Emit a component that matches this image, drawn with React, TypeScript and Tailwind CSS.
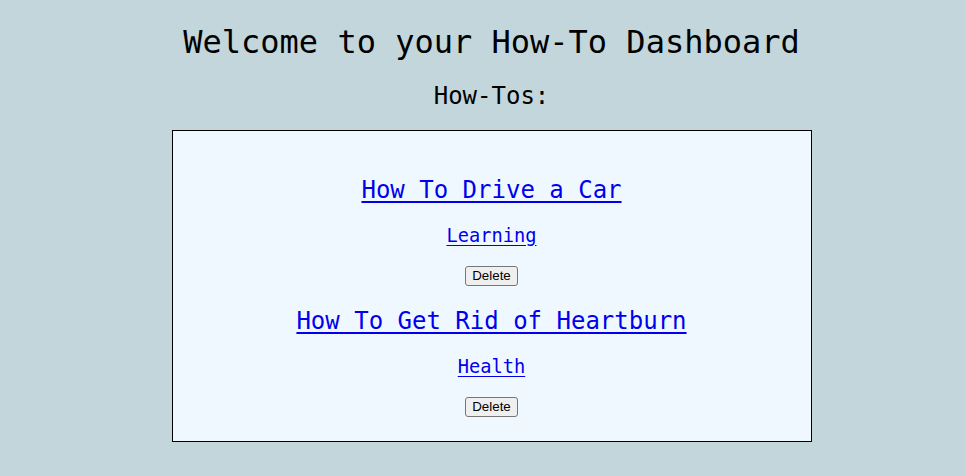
const howTos = [
  { id: 1, title: "How To Drive a Car", category: "Learning" },
  { id: 2, title: "How To Get Rid of Heartburn", category: "Health" },
];

export default function App() {
  return (
    <div
      className="min-h-screen bg-[#c2d6dc] pt-6 pl-[18px] text-center text-black"
      style={{ fontFamily: '"DejaVu Sans Mono", "Liberation Mono", monospace' }}
    >
      <h1 className="text-[32px] leading-[37px] font-normal">Welcome to your How-To Dashboard</h1>
      <h2 className="mt-[21px] text-[24px] leading-[28px] font-normal">How-Tos:</h2>

      <div className="mx-auto mt-5 w-[640px] border border-black bg-[#f0f8ff] pt-[45px] pb-[24px]">
        {howTos.map((h, i) => (
          <div key={h.id} className={i > 0 ? "mt-[21px]" : ""}>
            <a href="#" className="block text-[24px] leading-[28px] text-[#0000ee] underline underline-offset-[3px]">
              <span>{h.title}</span>
            </a>
            <a href="#" className="mt-[21px] inline-block text-[18.7px] leading-[22px] text-[#0000ee] underline underline-offset-[3px]">
              {h.category}
            </a>
            <div className="mt-[17px] flex justify-center">
              <button
                className="h-5 rounded-[3px] border border-[#767676] bg-[#efefef] px-[6px] text-[13.33px] leading-[16px] text-black"
                style={{ fontFamily: '"Liberation Sans", Arial, sans-serif' }}
              >
                Delete
              </button>
            </div>
          </div>
        ))}
      </div>
    </div>
  );
}
